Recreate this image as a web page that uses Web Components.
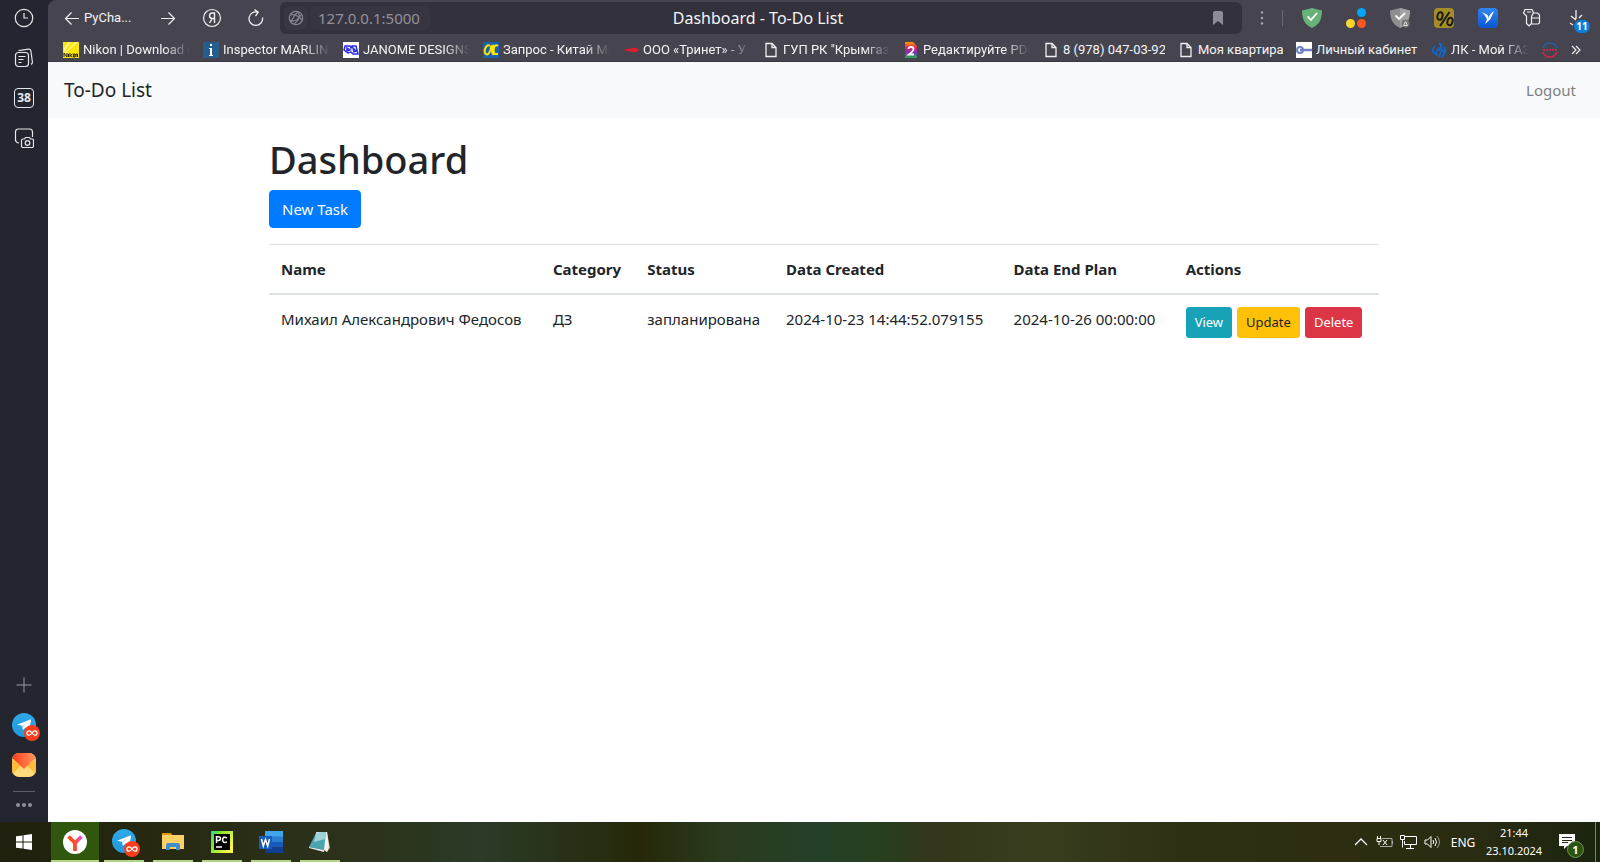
<!DOCTYPE html>
<html lang="en">
<head>
<meta charset="utf-8">
<title>Dashboard - To-Do List</title>
<style>
body { margin: 0; font-family: "Noto Sans", "Liberation Sans", sans-serif; }
</style>
</head>
<body>
<desktop-shell></desktop-shell>
<script>
const define = (name, css, html) => {
  const tpl = document.createElement('template');
  tpl.innerHTML = `<style>*{box-sizing:border-box}${css}</style>${html}`;
  customElements.define(name, class extends HTMLElement {
    constructor() {
      super();
      this.attachShadow({ mode: 'open' }).append(tpl.content.cloneNode(true));
    }
  });
};

const btnReset = 'button{appearance:none;border:0;background:none;padding:0;margin:0;color:inherit;font:inherit;display:flex;align-items:center;justify-content:center}svg{display:block;flex:none}';

const telegram = `<svg width="28" height="28" viewBox="0 0 28 28"><defs><linearGradient id="tg" x1="0" y1="0" x2="0" y2="1"><stop stop-color="#2fa9e8"/><stop offset="1" stop-color="#2199db"/></linearGradient></defs><circle cx="12" cy="12" r="12" fill="url(#tg)"/><path d="M5 11.800 18.200 6.500c.6-.2 1 .1.9.8L17 17.400 13.300 14.700 11 17l-1-4.200z" fill="#fff"/><path d="m9.800 13 6.200-4-5 4.800-.2 2.800z" fill="#b8d9ee"/><circle cx="20" cy="20" r="8" fill="#f93e1e"/><path d="M20 20c-1.200-1.800-2-2.200-2.900-2.200a2.200 2.200 0 0 0 0 4.400c.9 0 1.700-.4 2.900-2.200s2-2.200 2.900-2.200a2.200 2.200 0 0 1 0 4.400c-.9 0-1.700-.4-2.900-2.200z" fill="none" stroke="#fff" stroke-width="1.300"/></svg>`;

/* Narrow launcher strip on the left of the browser window */
define('side-rail', `
:host{display:flex;flex-direction:column;align-items:center;background:#23252f;color:#e8e8ea;padding:4px 0 10px}
${btnReset}
button{width:48px;height:40px;margin:-6px 0 6px;flex:none}
.tg{padding:4px 0 0 4px}
.grow{flex:1}
hr{width:22px;border:0;border-top:1px solid #5b5d66;margin:0 0 6px}
.n{width:20px;height:20px;border:1px solid #e8e8ea;border-radius:4px;font-size:12px;line-height:18px;font-weight:700;text-align:center}
.more{height:14px;margin:0}
`, `
<button aria-label="History"><svg width="20" height="20" fill="none" stroke="currentColor" stroke-width="1.200"><circle cx="10" cy="10" r="8.700"/><path d="M10 5v5h4"/></svg></button>
<button aria-label="Collections"><svg width="20" height="20" fill="none" stroke="currentColor" stroke-width="1.200"><rect x="1.500" y="4.500" width="13" height="14" rx="3"/><path d="M4.500 2.600 14.500 1.200q2-.2 2.400 1.800l1.500 11q.2 1.600-1.300 2.400M4.500 8.500h7M4.500 11.500h5M4.500 14.500h3"/></svg></button>
<button aria-label="Tabs"><span class="n">38</span></button>
<button aria-label="Screenshot"><svg width="20" height="20" fill="none" stroke="currentColor" stroke-width="1.200"><path d="M5 15H4.500Q1.500 14 1.500 12V4q0-3 3-3h11q3 0 3 3v5"/><path d="M7.500 12.500q0-1.500 1.500-1.500h1.500l1-1.500h4l1 1.500H18q1.500 0 1.500 1.500V18q0 1.500-1.500 1.500H9q-1.500 0-1.500-1.500z"/><circle cx="13.500" cy="15" r="2.300"/></svg></button>
<div class="grow"></div>
<button aria-label="Add"><svg width="16" height="16" stroke="#9a9ba2"><path d="M8 .5v15M.5 8h15"/></svg></button>
<button class="tg" aria-label="Telegram">${telegram}</button>
<button aria-label="Mail"><svg width="24" height="24"><defs><clipPath id="mc"><rect width="24" height="24" rx="7"/></clipPath><linearGradient id="mg"><stop stop-color="#fb3b1d"/><stop offset="1" stop-color="#ff9a5c"/></linearGradient></defs><g clip-path="url(#mc)"><path d="M0 0h24v24H0z" fill="#ffdb7c"/><path d="M0 6v15L9 13zM24 6v15l-9-8z" fill="#fdbc3a"/><path d="M0 0h24v5L12 16 0 5z" fill="url(#mg)"/></g></svg></button>
<hr>
<button class="more" aria-label="More"><svg width="16" height="4" fill="#8f9097"><circle cx="2" cy="2" r="2"/><circle cx="8" cy="2" r="2"/><circle cx="14" cy="2" r="2"/></svg></button>
`);

/* One bookmark: icon in the "icon" slot, title in the default slot */
define('bookmark-link', `
:host{display:block;flex:none;width:127px;height:20px}
:host([size=m]){width:122px}
:host([size=s]){width:105px}
:host([size=xs]){width:98px}
a{display:flex;gap:4px;align-items:center;color:#f4f4f5;text-decoration:none;font:13px/20px Roboto,"Noto Sans",sans-serif}
.i{width:16px;height:16px;display:flex;justify-content:center;flex:none}
.t{flex:1;white-space:nowrap;overflow:hidden}
:host([fade]) .t{-webkit-mask-image:linear-gradient(90deg,#000 calc(100% - 26px),transparent);mask-image:linear-gradient(90deg,#000 calc(100% - 26px),transparent)}
`, `<a href="#"><span class="i"><slot name="icon"></slot></span><span class="t"><slot></slot></span></a>`);

const page = `<svg slot="icon" width="12" height="16" fill="none" stroke="#f0f0f0" stroke-width="1.300"><path d="M1 1.500h6l4 4v9H1zM7 1.500v4h4"/></svg>`;

define('browser-bar', `
:host{display:block;background:#46454f;border-bottom:1px solid #3a3942;border-top-left-radius:8px;color:#f4f4f5;min-width:0}
${btnReset}
.row{display:flex;align-items:center;height:36px;padding:0 8px 0 16px}
.back{width:68px;justify-content:flex-start;gap:4px;font:13px/20px Roboto,"Noto Sans",sans-serif}
.nav{width:44px;height:32px}
.fwd{margin-left:14px}
.box{flex:1;display:flex;align-items:center;height:32px;margin:0 8px 0 2px;background:#33323c;border-radius:6px;padding:0 16px 0 4px;gap:2px}
.site{width:24px;height:24px;border-radius:6px;background:#383741}
.url{width:120px;height:24px;border-radius:6px;border:0;background:#373640;color:#92919a;font:15px/24px "Noto Sans",sans-serif;padding:0 8px;margin:0}
.title{flex:1;text-align:center;font-size:16px;line-height:24px;padding-right:124px}
.ext{width:44px;height:32px}
.dots{width:24px;height:32px}
.sep{width:1px;height:16px;background:#6b6a73;margin:0 7px 0 8px}
.dl{width:36px;height:32px;position:relative;margin-left:6px;margin-right:-4px}
.dl b{position:absolute;left:14px;top:18px;background:#0a7fe0;color:#fff;border-radius:7px;font-size:10px;line-height:13px;width:16px;text-align:center}
.marks{display:flex;gap:13px;height:25px;padding:4px 8px 0 15px;overflow:hidden}
.last{width:16px;flex:none}
.chev{height:20px}
`, `
<div class="row">
<button class="back"><svg width="16" height="16" fill="none" stroke="#f0f0f0" stroke-width="1.200"><path d="M15 8.500H1.500M7.500 2.500l-6 6 6 6"/></svg>PyCha...</button>
<button class="nav fwd" aria-label="Forward"><svg width="16" height="16" fill="none" stroke="#f0f0f0" stroke-width="1.200"><path d="M1 8.500h13.500M8.500 2.500l6 6-6 6"/></svg></button>
<button class="nav" aria-label="Yandex"><svg width="20" height="20" fill="none" stroke="#f0f0f0" stroke-width="1.200"><circle cx="10" cy="10" r="8.500"/><path d="M12.500 15V5H10.300Q7.500 5.200 7.500 7.800T10.300 10.500H12.500M10.300 10.500 7.500 15" stroke-width="1.400"/></svg></button>
<button class="nav" aria-label="Reload"><svg width="18" height="18" fill="none" stroke="#f0f0f0" stroke-width="1.300"><path d="M15.500 8.500A6.800 6.800 0 1 1 11 3.200M7.500.5l3.700 2.700-2.700 4"/></svg></button>
<div class="box">
<button class="site" aria-label="Site information"><svg width="16" height="16" fill="none" stroke="#85848d" stroke-width="1.200"><circle cx="8" cy="8" r="6.700"/><path d="M2 5q6-2 12 5M3 13Q5 6 10 2M6 14Q14 8 10 2M2 10q6 3 11-5"/></svg></button>
<input class="url" aria-label="Address" value="127.0.0.1:5000">
<div class="title">Dashboard - To-Do List</div>
<button aria-label="Bookmark page"><svg width="16" height="16"><path d="M3 3q0-2 2-2h6q2 0 2 2v12l-5-4-5 4z" fill="#8d8c94"/></svg></button>
</div>
<button class="dots" aria-label="Menu"><svg width="4" height="16" fill="#aaa9b0"><circle cx="2" cy="2.500" r="1.200"/><circle cx="2" cy="8" r="1.200"/><circle cx="2" cy="13.500" r="1.200"/></svg></button>
<span class="sep"></span>
<button class="ext" aria-label="AdGuard"><svg width="20" height="20"><path d="M10 0 20 2.500C20 12 16.500 17 10 20 3.500 17 0 12 0 2.500z" fill="#67b279"/><path d="M5.500 8.500 9 12l6-7" fill="none" stroke="#fff" stroke-width="1.800"/></svg></button>
<button class="ext" aria-label="Dots"><svg width="20" height="20"><circle cx="15.500" cy="4.500" r="4.500" fill="#04a5f4"/><circle cx="4.500" cy="15.500" r="4.500" fill="#fed62e"/><circle cx="15.500" cy="15.500" r="4.500" fill="#fd5523"/></svg></button>
<button class="ext" aria-label="Shield"><svg width="20" height="20"><path d="M10 0 20 2.500C20 12 16.500 17 10 20 3.500 17 0 12 0 2.500z" fill="#8e8e8e"/><path d="M10 0 20 2.500C20 12 16.500 17 10 20z" fill="#a2a2a2"/><path d="M5.500 7.500 9 11l6-6" fill="none" stroke="#fff" stroke-width="1.800"/><circle cx="15.500" cy="15.500" r="4" fill="#777"/><path d="m13.500 17.500 2-4 2 4z" fill="none" stroke="#ddd"/></svg></button>
<button class="ext" aria-label="Discounts"><svg width="20" height="20"><rect width="20" height="20" rx="4" fill="#a48c27"/><g fill="none" stroke="#1e1b14" stroke-width="2"><ellipse cx="6" cy="8" rx="2.500" ry="3.800" transform="rotate(15 6 8)"/><ellipse cx="16" cy="13.500" rx="2.500" ry="3.800" transform="rotate(15 16 13.500)"/><path d="M15.500 4 6 18"/></g></svg></button>
<button class="ext" aria-label="Bird"><svg width="20" height="20"><defs><linearGradient id="bb" x1="0" y1="0" x2="0" y2="1"><stop stop-color="#2f86f2"/><stop offset="1" stop-color="#0a55cf"/></linearGradient></defs><rect width="20" height="20" rx="4" fill="url(#bb)"/><path d="m4 4 5 2.500q1.500 1 1.500 3.500Q11.500 6 16 3l-3.500 8-5.500 5 2-5Q7 7 4 4z" fill="#fff"/></svg></button>
<button class="ext" aria-label="Passwords"><svg width="20" height="20" fill="none" stroke="#f0f0f0" stroke-width="1.200"><path d="M3 1.500h7l1.500 3-2 4v7L7 18l-2.500-2.500V8L1.500 5zM5 4h4M11.500 5h4l2 2v8L16 16H9.500M10 10h8"/></svg></button>
<button class="dl" aria-label="Downloads"><svg width="20" height="20" fill="none" stroke="#f0f0f0" stroke-width="1.300"><path d="M8 2v9M3 8l5 4M2 15l3 2M14 7l-3 3"/></svg><b>11</b></button>
</div>
<nav class="marks">
<bookmark-link fade><svg slot="icon" width="16" height="16"><path d="M0 0h16v16H0z" fill="#ffe600"/><path d="M5 0h3L1 10V6zM12 0h3L2 12H0z" fill="#fff38a"/><path d="M1 15v-4l3 4v-4M5.500 12v3M7 11v4M9.500 12 7.500 13.500l2 1.500M12 12h-1.500v3H12zM13 15v-3h1.500v3" stroke="#222" fill="none"/></svg>Nikon | Download c</bookmark-link>
<bookmark-link fade><svg slot="icon" width="16" height="16"><path d="M0 0h16v16H0z" fill="#255e8c"/><path d="M7 2h2v2H7zM6 6h3v7h1v1H6v-1h1V7H6z" fill="#fff"/></svg>Inspector MARLIN</bookmark-link>
<bookmark-link fade><svg slot="icon" width="16" height="16"><path d="M0 0h16v16H0z" fill="#fff"/><path d="M2 4h5l1 2 1-2h4l2 8h-5l-2-2-3 1L1 8zM4 6v3l3-1zM10 6l1 4 2-1z" fill="none" stroke="#2c2ce8" stroke-width="1.500"/></svg>JANOME DESIGNS</bookmark-link>
<bookmark-link fade><svg slot="icon" width="16" height="16"><path d="M0 0h16v16H0z" fill="#1b62ae"/><path d="M7 4Q5 2 3 5t-1 6q2 3 4 0t2-6q3-3 2 0l-1 5q1 4 3 1M15 4q-3-2-4 2t1 6h3" fill="none" stroke="#ffe500" stroke-width="2"/></svg>Запрос - Китай Ми</bookmark-link>
<bookmark-link fade><svg slot="icon" width="16" height="16"><path d="m0 8 9-2q5-1 7 2-2 3-7 2z" fill="#d8202a"/></svg>ООО «Тринет» - У</bookmark-link>
<bookmark-link fade>${page}ГУП РК "Крымгазс</bookmark-link>
<bookmark-link fade><svg slot="icon" width="12" height="16"><defs><linearGradient id="r" x1="0" y1="0" x2="0" y2="1"><stop stop-color="#ff9a00"/><stop offset=".35" stop-color="#e0245e"/><stop offset=".65" stop-color="#7a2ec0"/><stop offset="1" stop-color="#22b04b"/></linearGradient></defs><path d="M0 0h8l4 4v12H0z" fill="url(#r)"/><path d="M3.500 7q0-2 2.500-2t2.500 2-4.500 5.500H9" fill="none" stroke="#fff" stroke-width="1.800"/></svg>Редактируйте PDF</bookmark-link>
<bookmark-link size="m">${page}8 (978) 047-03-92</bookmark-link>
<bookmark-link size="s">${page}Моя квартира</bookmark-link>
<bookmark-link size="m"><svg slot="icon" width="16" height="16"><path d="M0 0h16v16H0z" fill="#fff"/><circle cx="4" cy="8" r="3" fill="none" stroke="#6f7fc4" stroke-width="2"/><path d="M4 8h12" stroke="#6f7fc4" stroke-width="2.500"/></svg>Личный кабинет</bookmark-link>
<bookmark-link fade size="xs"><svg slot="icon" width="16" height="16" fill="none" stroke="#0a6be0" stroke-width="1.500"><path d="M5 13Q-1 9 4 4M7 14Q3 10 8 6.500T8 1q4 4 0 8M9 15q-1-4 3-7 3 3-1 7M13 5q2 3 1 6"/></svg>ЛК - Мой ГАЗ</bookmark-link>
<a class="last" href="#" aria-label="Services"><svg width="16" height="20" fill="none" stroke-width="1.500"><path d="M1 8Q3 3 8 3t7 5" stroke="#245f9e"/><path d="M1 12q2 5 7 5t7-5" stroke="#d9234e"/><path d="M1 10h14" stroke="#c02a50" stroke-width="2" stroke-dasharray="2 1"/></svg></a>
<button class="chev" aria-label="More bookmarks"><svg width="10" height="10" fill="none" stroke="#e8e8ea" stroke-width="1.200"><path d="m1 1 4 4-4 4M5 1l4 4-4 4"/></svg></button>
</nav>`);

define('site-navbar', `
:host{display:flex;justify-content:space-between;align-items:center;background:#f8f9fa;padding:8px 24px 8px 16px;min-height:56px}
a{text-decoration:none}
.brand{color:#212529;font-size:19px;line-height:30px}
.out{color:#808182;font-size:15px;line-height:24px}
`, `<a class="brand" href="#">To-Do List</a><a class="out" href="#">Logout</a>`);

define('task-button', `
:host{display:inline-block;vertical-align:middle}
button{font:15px/24px "Noto Sans",sans-serif;color:#fff;background:#007bff;border:1px solid #007bff;border-radius:4px;padding:6px 12px;display:block}
:host([small]) button{font-size:13px;line-height:21px;border-radius:3px;padding:4px 8px}
:host([kind=info]) button{background:#17a2b8;border-color:#17a2b8}
:host([kind=warning]) button{background:#ffc107;border-color:#ffc107;color:#212529}
:host([kind=danger]) button{background:#dc3545;border-color:#dc3545}
`, `<button type="button"><slot></slot></button>`);

define('task-dashboard', `
:host{display:block;max-width:1140px;width:100%;margin:20px auto 0;padding:0 15px;color:#212529;font-size:15px;line-height:24px}
h1{font-size:38px;line-height:42px;font-weight:500;margin:0 0 10px}
table{width:100%;border-collapse:collapse;margin-top:16px;table-layout:fixed}
th,td{text-align:left;padding:12px;vertical-align:top;border-top:1px solid #dee2e6;white-space:nowrap}
th{border-bottom:2px solid #dee2e6;font-weight:700}
.c1{width:24.5%}.c2{width:8.5%}.c3{width:12.5%}.c4{width:20.5%}.c5{width:15.5%}
.act{display:flex;gap:5px}
`, `
<h1>Dashboard</h1>
<task-button>New Task</task-button>
<table>
<colgroup><col class="c1"><col class="c2"><col class="c3"><col class="c4"><col class="c5"><col></colgroup>
<thead><tr><th>Name</th><th>Category</th><th>Status</th><th>Data Created</th><th>Data End Plan</th><th>Actions</th></tr></thead>
<tbody><tr><td>Михаил Александрович Федосов</td><td>ДЗ</td><td>запланирована</td><td>2024-10-23 14:44:52.079155</td><td>2024-10-26 00:00:00</td>
<td><div class="act"><task-button small kind="info">View</task-button><task-button small kind="warning">Update</task-button><task-button small kind="danger">Delete</task-button></div></td></tr></tbody>
</table>`);

define('task-bar', `
:host{display:flex;align-items:stretch;height:40px;color:#fff;background:linear-gradient(90deg,#1f200e 0,#26270f 8%,#2b3018 18%,#2b331c 24%,#2b3b28 30%,#262809 40%,#2a3a1d 45%,#254029 51%,#26401f 55%,#33361a 58%,#383d1e 65%,#2e3014 74%,#2e2d11 83%,#2a2c11 92%,#1b2410 100%)}
${btnReset}
.start{width:48px;margin-right:3px}
.app{width:40px;margin:0 9px 0 0;padding-top:2px;border-bottom:2px solid #b1d583}
.app.on{width:48px;margin-right:5px;background:#31560e}
.app.tg{padding:4px 0 0 4px}
.grow{flex:1}
.tray{width:24px}
.lang{font-size:12px;width:36px}
.clock{font-size:11px;line-height:18px;text-align:center;width:66px;padding-top:2px}
.note{width:32px;position:relative;margin:0 11px 0 5px}
.note b{position:absolute;right:0;bottom:4px;width:17px;height:17px;border-radius:50%;background:#2c5410;border:1px solid #6f9350;font-size:11px;line-height:15px;text-align:center}
.peek{width:5px;border-left:1px solid #7c8071}
`, `
<button class="start" aria-label="Start"><svg width="16" height="16" fill="#fff"><path d="M0 2.300 6.500 1.400v6.100H0zM7.500 1.200 16 0v7.500H7.500zM0 8.500h6.500v6.100L0 13.700zM7.500 8.500H16V16l-8.500-1.200z"/></svg></button>
<button class="app on" aria-label="Yandex Browser"><svg width="24" height="24"><defs><linearGradient id="yg" gradientUnits="userSpaceOnUse" x1="5" y1="0" x2="19" y2="0"><stop offset=".5" stop-color="#fc4b1e"/><stop offset=".9" stop-color="#e84bd0"/></linearGradient></defs><circle cx="12" cy="12" r="12" fill="#fff"/><path d="M5.500 6.500 12 13v8M18.500 6.500 12 13" fill="none" stroke="url(#yg)" stroke-width="3.800"/></svg></button>
<button class="app tg" aria-label="Telegram">${telegram}</button>
<button class="app" aria-label="Explorer"><svg width="22" height="20"><path d="M0 1h9l2 3H0z" fill="#d9970f"/><path d="M0 3h22v14H0z" fill="#fcd163"/><path d="M4 18v-5q0-2 2-2h10q2 0 2 2v5h-4v-3H8v3z" fill="#3f8fcf"/></svg></button>
<button class="app" aria-label="PyCharm"><svg width="22" height="22"><defs><linearGradient id="pg" x2="1" y2=".6"><stop stop-color="#21d789"/><stop offset=".35" stop-color="#7ee82e"/><stop offset="1" stop-color="#fcf84a"/></linearGradient></defs><path d="M0 0h22v22H0z" fill="url(#pg)"/><path d="M3 3h16v16H3z"/><path d="M5.500 12V5.800h2q2 0 2 1.800t-2 1.800h-2M16 6.800q-4-2-4.400 2 .4 4 4.400 2M5 16h6" stroke="#fff" stroke-width="1.500" fill="none"/></svg></button>
<button class="app" aria-label="Word"><svg width="24" height="22"><path d="M6 0h18v6H6z" fill="#41a5ee"/><path d="M6 5.500h18V11H6z" fill="#2b7cd3"/><path d="M6 11h18v5.500H6z" fill="#185abd"/><path d="M6 16.500h18V22H6z" fill="#103f91"/><path d="M0 5h13v13H0z" fill="#185abd"/><path d="m2.500 8 1.800 7L6.500 8.500 8.700 15l1.800-7" fill="none" stroke="#fff" stroke-width="1.500"/></svg></button>
<button class="app" aria-label="Notepad"><svg width="24" height="24"><path d="M19 2 22 18l-3 4-3-2z" fill="#c9a377"/><path d="M8 2h11l2 15-2 5-4-3z" fill="#f1f3f3"/><path d="M8 3 18 2l-2 18L1 17z" fill="#4aa5b1"/><path d="M8 3 18 2l-.8 7L6 12z" fill="#9fd3da"/><path d="M1 17l15 3v2L1 18z" fill="#e8eeee"/></svg></button>
<div class="grow"></div>
<button class="tray" aria-label="Hidden icons"><svg width="14" height="10" fill="none" stroke="#fff" stroke-width="1.300"><path d="m1 8 6-6 6 6"/></svg></button>
<button class="tray" aria-label="Power"><svg width="18" height="14" fill="none" stroke="#fff"><path d="M1 3.500h4v3H1zM1.500 1v2M4.500 1v2M3 6.500V10"/><path d="M6 3.500h10v8H4M16.500 6v3" stroke="#aaa"/><path d="m7 5 4 5M11 5l-4 5"/></svg></button>
<button class="tray" aria-label="Network"><svg width="18" height="16" fill="none" stroke="#fff"><path d="M5 2.500h11.500v8H4.500V7M10.500 10.500v4M6 14.500h8M.5 1.500h4v4h-4zM2.500 5.500v8"/></svg></button>
<button class="tray" aria-label="Volume"><svg width="18" height="14" fill="none" stroke="#fff"><path d="M1 5h2.500L7 1.500v11L3.500 9H1zM9 5q1.500 2 0 4M11 3q3 4 0 8"/><path d="M13 1q5 6 0 12" stroke="#999"/></svg></button>
<button class="lang">ENG</button>
<time class="clock">21:44<br>23.10.2024</time>
<button class="note" aria-label="Notifications"><svg width="18" height="16"><path d="M0 0h16v12H8l-3 3v-3H0z" fill="#fff"/><path d="M3 3.500h10M3 6.500h10M3 8.500h6" stroke="#23280f"/></svg><b>1</b></button>
<button class="peek" aria-label="Show desktop"></button>
`);

define('desktop-shell', `
:host{display:grid;grid-template-columns:48px minmax(0,1fr);grid-template-rows:minmax(0,1fr) auto;height:100vh;background:#23252f}
main{display:flex;flex-direction:column;min-width:0}
.view{flex:1;background:#fff;min-height:0}
task-bar{grid-column:1/-1}
`, `
<side-rail></side-rail>
<main><browser-bar></browser-bar><div class="view"><site-navbar></site-navbar><task-dashboard></task-dashboard></div></main>
<task-bar></task-bar>`);
</script>
</body>
</html>
